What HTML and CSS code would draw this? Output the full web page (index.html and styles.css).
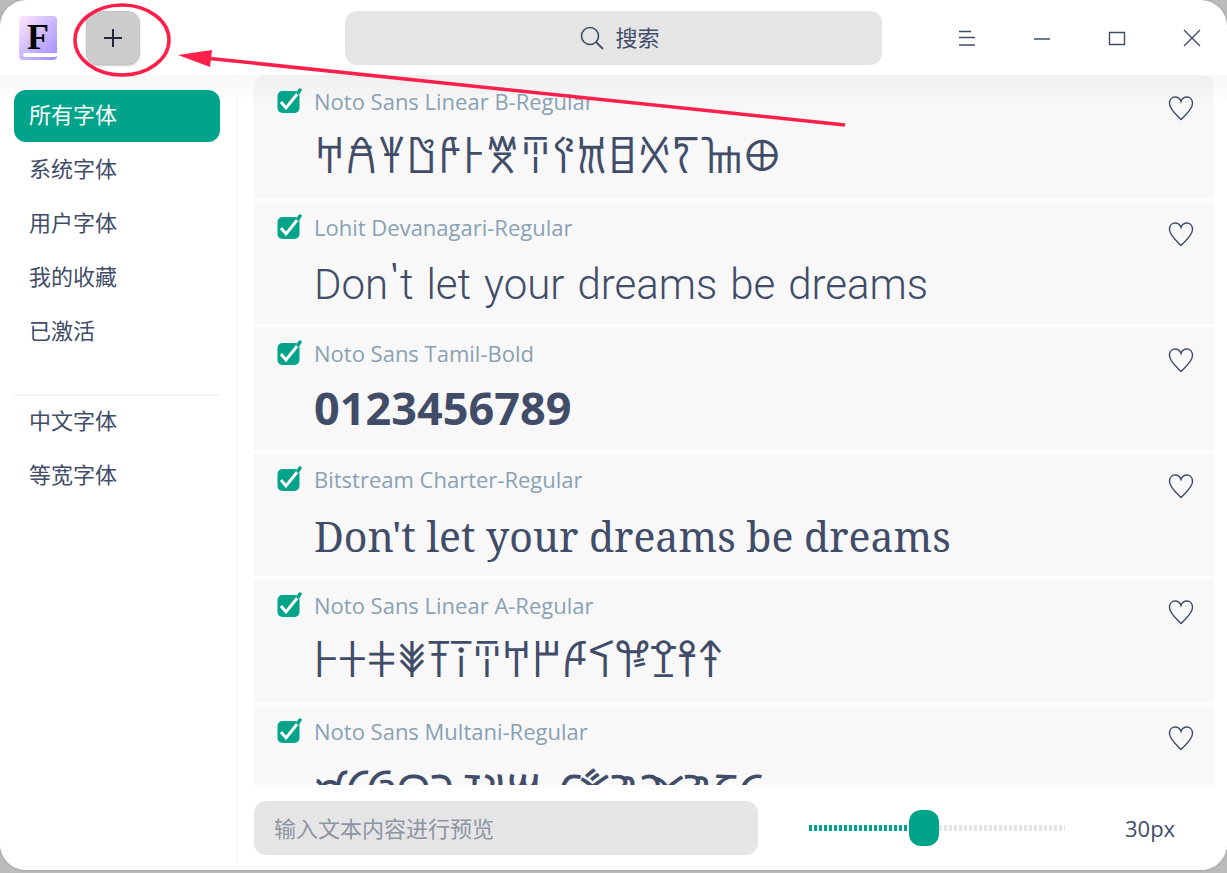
FILE: index.html
```html
<!DOCTYPE html>
<html lang="zh-CN">
<head>
    <meta charset="utf-8">
    <title>字体管理器</title>
    <link rel="stylesheet" href="styles.css">
</head>
<body>
    <svg class="symbols" aria-hidden="true">
        <symbol id="heart" viewBox="0 0 26 26">
            <path d="M13 24.500C9 20 1.500 14.500 1.500 8.500C1.500 4.500 4 2 7 2C10 2 12 3.500 13 6.500C14 3.500 16 2 19 2C22 2 24.500 4.500 24.500 8.500C24.500 14.500 17 20 13 24.500Z" fill="none" stroke="#414d68" stroke-width="1.400"/>
        </symbol>
    </svg>

    <div class="window">
        <header class="titlebar">
            <div class="titlebar-left">
                <svg class="logo" viewBox="0 0 40 46" role="img" aria-label="字体管理器">
                    <defs>
                        <linearGradient id="logo-bg" x1="0" y1="0" x2="1" y2="1">
                            <stop offset="0" stop-color="#ffe6fb"/>
                            <stop offset="1" stop-color="#9d8cff"/>
                        </linearGradient>
                    </defs>
                    <rect x="1" y="1" width="38" height="44" rx="4" fill="url(#logo-bg)"/>
                    <path d="M39 38H7a2 2 0 0 0 0 4h30l2-1z" fill="#fff"/>
                    <text class="logo-letter" x="20" y="34" text-anchor="middle">F</text>
                </svg>
                <button class="add-button" aria-label="添加字体">
                    <svg viewBox="0 0 18 18" width="18" height="18"><path d="M9 0v18M0 9h18" stroke="#25263a" stroke-width="2"/></svg>
                </button>
            </div>
            <label class="search">
                <svg viewBox="0 0 24 24" width="24" height="24"><circle cx="10" cy="10" r="8.500" fill="none" stroke="#414d68" stroke-width="1.600"/><path d="M16 16l7 7" stroke="#414d68" stroke-width="1.800"/></svg>
                <input type="text" placeholder="搜索" aria-label="搜索">
            </label>
            <div class="window-controls">
                <button aria-label="菜单"><svg viewBox="0 0 18 18"><path d="M1 2.500h12M1 8.500h16M1 16h16"/></svg></button>
                <button aria-label="最小化"><svg viewBox="0 0 18 18"><path d="M1 10h16"/></svg></button>
                <button aria-label="最大化"><svg viewBox="0 0 18 18"><path d="M1.500 3.500h15v12h-15z"/></svg></button>
                <button aria-label="关闭"><svg viewBox="0 0 18 18"><path d="M1 1l16 16M17 1L1 17"/></svg></button>
            </div>
        </header>

        <nav class="sidebar">
            <a class="active" href="#all">所有字体</a>
            <a href="#system">系统字体</a>
            <a href="#user">用户字体</a>
            <a href="#favorites">我的收藏</a>
            <a href="#active">已激活</a>
            <hr>
            <a href="#chinese">中文字体</a>
            <a href="#mono">等宽字体</a>
        </nav>

        <main class="content">
            <ul class="font-list">
                <li class="font-item">
                    <label class="font-name"><input type="checkbox" checked>Noto Sans Linear B-Regular</label>
                    <button class="favorite" aria-label="收藏"><svg><use href="#heart"/></svg></button>
                    <p class="preview linear-b">&#x10000;&#x10001;&#x10002;&#x10003;&#x10004;&#x10005;&#x10006;&#x10007;&#x10008;&#x10009;&#x1000A;&#x1000B;&#x1000D;&#x1000E;&#x1000F;</p>
                </li>
                <li class="font-item">
                    <label class="font-name"><input type="checkbox" checked>Lohit Devanagari-Regular</label>
                    <button class="favorite" aria-label="收藏"><svg><use href="#heart"/></svg></button>
                    <p class="preview lohit">Don't let your dreams be dreams</p>
                </li>
                <li class="font-item">
                    <label class="font-name"><input type="checkbox" checked>Noto Sans Tamil-Bold</label>
                    <button class="favorite" aria-label="收藏"><svg><use href="#heart"/></svg></button>
                    <p class="preview tamil">0123456789</p>
                </li>
                <li class="font-item">
                    <label class="font-name"><input type="checkbox" checked>Bitstream Charter-Regular</label>
                    <button class="favorite" aria-label="收藏"><svg><use href="#heart"/></svg></button>
                    <p class="preview charter">Don't let your dreams be dreams</p>
                </li>
                <li class="font-item">
                    <label class="font-name"><input type="checkbox" checked>Noto Sans Linear A-Regular</label>
                    <button class="favorite" aria-label="收藏"><svg><use href="#heart"/></svg></button>
                    <p class="preview linear-a">&#x10600;&#x10601;&#x10602;&#x10603;&#x10604;&#x10605;&#x10606;&#x10607;&#x10608;&#x10609;&#x1060A;&#x1060B;&#x1060C;&#x1060D;&#x1060E;</p>
                </li>
                <li class="font-item">
                    <label class="font-name"><input type="checkbox" checked>Noto Sans Multani-Regular</label>
                    <button class="favorite" aria-label="收藏"><svg><use href="#heart"/></svg></button>
                    <p class="preview multani">&#x11280;&#x11281;&#x11282;&#x11283;&#x11284;&#x11285;&#x11286;&#x11288;&#x1128A;&#x1128B;&#x1128C;&#x1128D;&#x1128F;&#x11290;&#x11291;</p>
                </li>
            </ul>
            <footer class="preview-bar">
                <input class="preview-input" type="text" placeholder="输入文本内容进行预览" aria-label="预览文本">
                <input class="size-slider" id="size" type="range" min="6" max="60" value="30" aria-label="字号">
                <output class="size-value" for="size">30px</output>
            </footer>
        </main>
    </div>

    <svg class="annotation" viewBox="0 0 860 140" aria-hidden="true">
        <ellipse cx="122" cy="40" rx="47" ry="35" fill="none" stroke="#ff1f4b" stroke-width="3.500"/>
        <path d="M205 58L845 125" stroke="#ff1f4b" stroke-width="3.500"/>
        <path d="M178 55l34-5-2 17z" fill="#ff1f4b"/>
    </svg>
</body>
</html>
```

FILE: styles.css
```css
* {
    box-sizing: border-box;
}
body {
    margin: 0;
    height: 100vh;
    padding-bottom: 3px;
    background-color: #bbb;
    color: #414d68;
    font-family: "Open Sans", "Noto Sans CJK SC", sans-serif;
    font-size: 22px;
}
button {
    padding: 0;
    border: none;
    background: none;
}
.symbols {
    display: none;
}
.window {
    display: grid;
    grid-template-columns: 238px 1fr;
    grid-template-rows: 75px 1fr;
    height: 100%;
    border-radius: 26px;
    background-color: #fff;
    overflow: hidden;
    box-shadow: 0 0 2px #777;
}

/* title bar */
.titlebar {
    grid-column: 1 / 3;
    display: grid;
    grid-template-columns: 1fr 537px 1fr;
    align-items: center;
}
.titlebar-left {
    display: flex;
    align-items: center;
    gap: 28px;
    padding-left: 18px;
}
.logo {
    width: 40px;
    height: 46px;
}
.logo-letter {
    font-family: "Liberation Serif", serif;
    font-size: 36px;
    font-weight: bold;
}
.add-button {
    display: flex;
    align-items: center;
    justify-content: center;
    width: 54px;
    height: 54px;
    border: 1px solid #c4c4c4;
    border-radius: 12px;
    background-color: #cdcdcd;
    box-shadow: 0 1px 2px #ccc;
}
.search {
    display: flex;
    align-items: center;
    justify-content: center;
    gap: 12px;
    padding-left: 18px;
    height: 54px;
    border-radius: 12px;
    background-color: #e5e5e5;
}
.search input {
    width: 50px;
    padding: 0 0 2px;
    border: none;
    background: none;
    font: inherit;
}
.search input::placeholder {
    color: #414d68;
    opacity: 1;
}
.window-controls {
    display: flex;
    justify-content: flex-end;
    gap: 57px;
    padding-right: 26px;
}
.window-controls svg {
    display: block;
    width: 18px;
    height: 18px;
    fill: none;
    stroke: #414d68;
    stroke-width: 1.4;
}

/* sidebar */
.sidebar {
    padding: 15px 16px 15px 14px;
    border-right: 2px solid #fafafa;
    background: linear-gradient(#f7f7f7, #fff 30px);
}
.sidebar a {
    display: block;
    height: 52px;
    margin-bottom: 2px;
    padding-left: 15px;
    border-radius: 12px;
    color: #414d68;
    line-height: 48px;
    text-decoration: none;
}
.sidebar a.active {
    background-color: #00a48a;
    color: #fff;
}
.sidebar hr {
    height: 2px;
    margin: 36px 0 0;
    border: none;
    background-color: #f5f5f5;
}

/* font list */
.content {
    display: flex;
    flex-direction: column;
    min-height: 0;
    padding: 0 13px 0 16px;
    background: linear-gradient(#f7f7f7, #fff 30px);
}
.font-list {
    flex: 1;
    min-height: 0;
    margin: 0;
    padding: 0;
    overflow: hidden;
    list-style: none;
}
.font-item {
    display: grid;
    grid-template-columns: 1fr 26px;
    grid-template-rows: 51px 1fr;
    height: 123px;
    margin-bottom: 3px;
    padding: 0 20px 0 22px;
    background-color: #f8f8f8;
}
.font-item:first-child {
    border-radius: 12px 12px 0 0;
    background-image: linear-gradient(#efefef, #f8f8f8 30px);
}
.font-name {
    display: flex;
    align-items: center;
    align-self: start;
    gap: 11px;
    height: 52px;
    color: #8aa1b4;
}
.font-name input {
    appearance: none;
    width: 27px;
    height: 28px;
    margin: 0;
    background: url("data:image/svg+xml,%3Csvg xmlns='http://www.w3.org/2000/svg' viewBox='0 0 27 28'%3E%3Crect x='1.500' y='4' width='22' height='22' rx='5' fill='%2300a48a'/%3E%3Cpath d='M5 15l5 6L22 6' fill='none' stroke='%23fff' stroke-width='3'/%3E%3Cpath d='M22 6l2-3' stroke='%2300a48a' stroke-width='3.500' stroke-linecap='round'/%3E%3C/svg%3E");
}
.favorite {
    align-self: end;
    padding-bottom: 5px;
}
.favorite svg {
    display: block;
    width: 26px;
    height: 26px;
}
.preview {
    grid-column: 1 / 3;
    margin: 0;
    padding-left: 38px;
    font-size: 45px;
    line-height: 60px;
    white-space: nowrap;
}
.linear-b {
    font-family: "Noto Sans Linear B", "Noto Sans", sans-serif;
}
.linear-a {
    font-family: "Noto Sans Linear A", "Noto Sans", sans-serif;
}
.multani {
    font-family: "Noto Sans Multani", "Noto Sans", sans-serif;
}
.lohit {
    font-family: "Lohit Devanagari", Roboto, sans-serif;
    font-size: 42px;
    font-weight: 300;
    line-height: 70px;
}
.tamil {
    font-family: "Noto Sans", sans-serif;
    font-weight: bold;
}
.charter {
    font-family: "Bitstream Charter", "Charter", "Noto Serif", serif;
    font-size: 41px;
    line-height: 64px;
}

/* preview bar */
.preview-bar {
    display: flex;
    align-items: center;
    height: 85px;
}
.preview-input {
    flex: 1;
    height: 54px;
    padding: 0 20px;
    border: none;
    border-radius: 12px;
    background-color: #e5e5e5;
    font: inherit;
}
.preview-input::placeholder {
    color: #8d94a3;
    opacity: 1;
}
.size-slider {
    appearance: none;
    width: 256px;
    height: 36px;
    margin: 0 60px 0 51px;
    background:
        repeating-linear-gradient(90deg, transparent 0 3px, #fff 3px 5px) center / 100% 6px no-repeat,
        linear-gradient(90deg, #00a48a 44%, #e5e5e5 44%) center / 100% 6px no-repeat;
}
.size-slider::-webkit-slider-thumb {
    appearance: none;
    width: 30px;
    height: 36px;
    border-radius: 12px;
    background-color: #00a48a;
}
.size-value {
    width: 89px;
}

.annotation {
    position: absolute;
    top: 0;
    left: 0;
    width: 860px;
    height: 140px;
    pointer-events: none;
}
```
